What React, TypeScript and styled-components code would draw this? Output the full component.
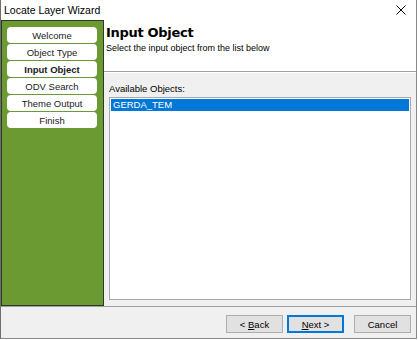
import styled, { createGlobalStyle } from 'styled-components';

const Global = createGlobalStyle`
    html, body {
        margin: 0;
        padding: 0;
        background: #ffffff;
    }
    body {
        font-family: "Liberation Sans", Arial, sans-serif;
        font-size: 10px;
        color: #000;
    }
`;

const Window = styled.div`
    width: 417px;
    height: 339px;
    box-sizing: border-box;
    display: flex;
    flex-direction: column;
    background: #f0f0f0;
    border-left: 1px solid #6e6e6e;
    border-right: 1px solid #8a8a8a;
    border-bottom: 1px solid #8a8a8a;
`;

const TitleBar = styled.div`
    height: 20px;
    flex: none;
    display: flex;
    align-items: center;
    justify-content: space-between;
    background: #ffffff;
    padding: 0 10px 0 3px;
    font-size: 10.5px;
`;

const Close = styled.svg`
    width: 10px;
    height: 10px;
`;

const Main = styled.div`
    flex: 1;
    display: flex;
    min-height: 0;
`;

const Sidebar = styled.div`
    width: 103px;
    flex: none;
    box-sizing: border-box;
    background: #6b9a32;
    border: 1px solid #2f3a26;
    padding: 6px 6px 0 5px;
    display: flex;
    flex-direction: column;
    gap: 1px;
`;

const Step = styled.div<{ $active?: boolean }>`
    height: 16px;
    background: #ffffff;
    border-radius: 4px;
    display: flex;
    align-items: center;
    justify-content: center;
    font-size: 9.5px;
    font-weight: ${(p) => (p.$active ? 700 : 400)};
    color: #1a1a1a;
`;

const Content = styled.div`
    flex: 1;
    display: flex;
    flex-direction: column;
    min-width: 0;
`;

const Header = styled.div`
    height: 52px;
    flex: none;
    background: #ffffff;
    padding: 4px 0 0 2px;
    box-sizing: border-box;
    border-bottom: 1px solid #a0a0a0;
`;

const Heading = styled.div`
    font-family: "DejaVu Sans", Verdana, sans-serif;
    font-weight: 700;
    font-size: 13px;
    line-height: 17px;
    letter-spacing: -0.3px;
`;

const Sub = styled.div`
    font-size: 9px;
    margin-top: 2px;
`;

const Body = styled.div`
    flex: 1;
    display: flex;
    flex-direction: column;
    padding: 10px 5px 6px 5px;
    border-top: 1px solid #ffffff;
`;

const Label = styled.div`
    font-size: 9.5px;
    margin-bottom: 3px;
`;

const ListBox = styled.div`
    flex: 1;
    background: #ffffff;
    border: 1px solid #a8a8b0;
    padding: 1px;
`;

const Item = styled.div<{ $selected?: boolean }>`
    height: 12px;
    line-height: 12px;
    padding-left: 2px;
    font-size: 9.5px;
    background: ${(p) => (p.$selected ? '#0078d7' : 'transparent')};
    color: ${(p) => (p.$selected ? '#ffffff' : '#000000')};
`;

const Footer = styled.div`
    height: 32px;
    flex: none;
    box-sizing: border-box;
    border-top: 1px solid #a0a0a0;
    display: flex;
    align-items: flex-start;
    justify-content: flex-end;
    padding: 8px 5px 0 0;
    gap: 4px;
`;

const Button = styled.button<{ $default?: boolean; $gap?: number }>`
    width: 57px;
    height: 18px;
    margin-left: ${(p) => p.$gap ?? 0}px;
    box-sizing: border-box;
    background: #e1e1e1;
    border: 1px solid ${(p) => (p.$default ? '#0078d7' : '#adadad')};
    box-shadow: ${(p) => (p.$default ? 'inset 0 0 0 1px #0078d7' : 'none')};
    font-family: "Liberation Sans", Arial, sans-serif;
    font-size: 9.5px;
    color: #000;
    padding: 0;
    u {
        text-decoration: underline;
    }
`;

const steps = ['Welcome', 'Object Type', 'Input Object', 'ODV Search', 'Theme Output', 'Finish'];

export default function App() {
    return (
        <>
            <Global />
            <Window>
                <TitleBar>
                    <span>Locate Layer Wizard</span>
                    <Close viewBox="0 0 10 10">
                        <path d="M0.5 0.5 L9.5 9.5 M9.5 0.5 L0.5 9.5" stroke="#000" strokeWidth="1" />
                    </Close>
                </TitleBar>
                <Main>
                    <Sidebar>
                        {steps.map((s) => (
                            <Step key={s} $active={s === 'Input Object'}>
                                {s}
                            </Step>
                        ))}
                    </Sidebar>
                    <Content>
                        <Header>
                            <Heading>Input Object</Heading>
                            <Sub>Select the input object from the list below</Sub>
                        </Header>
                        <Body>
                            <Label>Available Objects:</Label>
                            <ListBox>
                                <Item $selected>GERDA_TEM</Item>
                            </ListBox>
                        </Body>
                    </Content>
                </Main>
                <Footer>
                    <Button>
                        &lt; <u>B</u>ack
                    </Button>
                    <Button $default>
                        <u>N</u>ext &gt;
                    </Button>
                    <Button $gap={6}>Cancel</Button>
                </Footer>
            </Window>
        </>
    );
}
